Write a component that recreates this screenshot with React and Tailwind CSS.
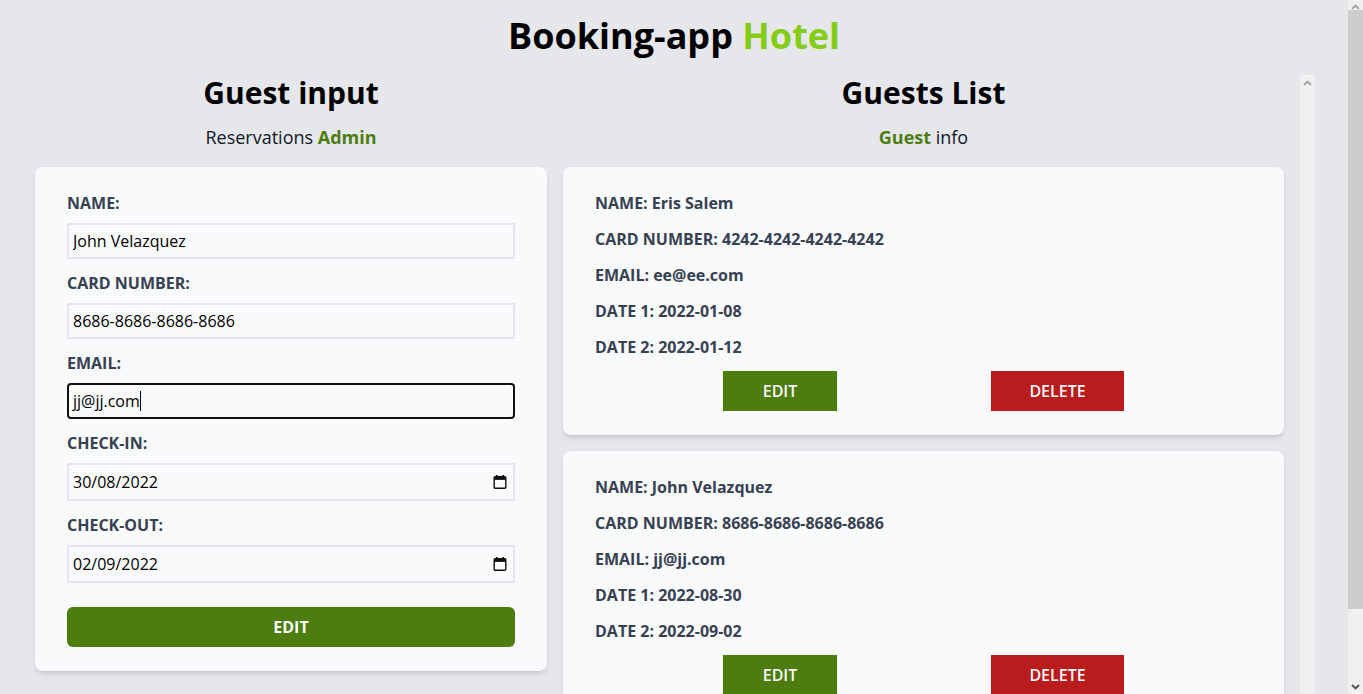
import React, { useState } from 'react';

const guests = [
  { id: 1, name: "Eris Salem", card: "4242-4242-4242-4242", email: "ee@ee.com", date1: "2022-01-08", date2: "2022-01-12" },
  { id: 2, name: "John Velazquez", card: "8686-8686-8686-8686", email: "jj@jj.com", date1: "2022-08-30", date2: "2022-09-02" },
  { id: 3, name: "Maria Lopez", card: "1234-5678-1234-5678", email: "mm@mm.com", date1: "2022-10-01", date2: "2022-10-05" },
];

function Chevron({ up = true, color = "#a3a3a3" }) {
  return (
    <svg width="9" height="6" viewBox="0 0 9 6">
      <path d={up ? "M1 5 L4.5 1.5 L8 5" : "M1 1 L4.5 4.5 L8 1"} fill="none" stroke={color} strokeWidth="1.8" />
    </svg>
  );
}

function CalendarIcon() {
  return (
    <svg width="14" height="15" viewBox="0 0 14 15" className="absolute right-2 top-1/2 -translate-y-1/2 pointer-events-none">
      <rect x="3" y="0.5" width="1.6" height="3" fill="#111" />
      <rect x="9.4" y="0.5" width="1.6" height="3" fill="#111" />
      <rect x="1.2" y="2.2" width="11.6" height="11.6" rx="1" fill="none" stroke="#111" strokeWidth="1.4" />
      <rect x="1.2" y="2.2" width="11.6" height="3.2" fill="#111" />
    </svg>
  );
}

function DateField({ value }) {
  return (
    <div className="relative mb-3">
      <input
        type="text"
        readOnly
        value={value}
        className="w-full h-[38px] border-2 border-gray-200 bg-transparent px-1 text-base text-black outline-none"
      />
      <CalendarIcon />
    </div>
  );
}

function GuestCard({ guest }) {
  return (
    <div className="bg-gray-50 rounded-lg shadow-md pt-6 pb-6 mb-4">
      <div className="px-8 text-base font-bold text-[#374151]">
        <p className="leading-6 mb-3">NAME: {guest.name}</p>
        <p className="leading-6 mb-3">CARD NUMBER: {guest.card}</p>
        <p className="leading-6 mb-3">EMAIL: {guest.email}</p>
        <p className="leading-6 mb-3">DATE 1: {guest.date1}</p>
        <p className="leading-6 mb-3">DATE 2: {guest.date2}</p>
      </div>
      <div className="flex justify-between px-[160px]">
        <button className="w-[114px] bg-[#4d7c0f] text-gray-50 font-semibold py-2 leading-6">EDIT</button>
        <button className="w-[133px] bg-[#b91c1c] text-gray-50 font-semibold py-2 leading-6">DELETE</button>
      </div>
    </div>
  );
}

export default function App() {
  const [name, setName] = useState("John Velazquez");
  const [card, setCard] = useState("8686-8686-8686-8686");

  return (
    <div className="flex h-screen overflow-hidden bg-gray-200 font-['Open_Sans',sans-serif] text-black">
      <div className="flex-1 min-w-0">
        <h1 className="pt-4 text-4xl leading-10 font-bold text-center">
          Booking-app <span className="text-[#84cc16]">Hotel</span>
        </h1>

        <div className="flex pl-[35px] pr-[33px] mt-[19px]">
          {/* guest input */}
          <div className="w-[512px] shrink-0">
            <h2 className="text-3xl leading-9 font-bold text-center">Guest input</h2>
            <p className="mt-3 text-lg leading-7 text-center text-gray-900">
              Reservations <span className="font-bold text-[#4d7c0f]">Admin</span>
            </p>

            <form className="mt-4 bg-gray-50 rounded-lg shadow-md px-8 pt-6 pb-6" onSubmit={(e) => e.preventDefault()}>
              <label className="block leading-6 mb-2 font-bold text-[#374151]">NAME:</label>
              <input
                type="text"
                value={name}
                onChange={(e) => setName(e.target.value)}
                className="block w-full h-9 mb-3 border-2 border-gray-200 bg-transparent px-1 text-base outline-none"
              />

              <label className="block leading-6 mb-2 font-bold text-[#374151]">CARD NUMBER:</label>
              <input
                type="text"
                value={card}
                onChange={(e) => setCard(e.target.value)}
                className="block w-full h-9 mb-3 border-2 border-gray-200 bg-transparent px-1 text-base outline-none"
              />

              <label className="block leading-6 mb-2 font-bold text-[#374151]">EMAIL:</label>
              <div className="flex items-center w-full h-9 mb-3 border-2 border-[#111] rounded-[4px] px-1 text-base">
                <span>jj@jj.com</span>
                <span className="inline-block w-px h-5 bg-black"></span>
              </div>

              <label className="block leading-6 mb-2 font-bold text-[#374151]">CHECK-IN:</label>
              <DateField value="30/08/2022" />

              <label className="block leading-6 mb-2 font-bold text-[#374151]">CHECK-OUT:</label>
              <DateField value="02/09/2022" />

              <button type="submit" className="mt-3 w-full bg-[#4d7c0f] text-gray-50 font-bold py-2 leading-6 rounded-md">
                EDIT
              </button>
            </form>
          </div>

          {/* guests list with its own scroll track */}
          <div className="flex-1 flex h-[690px]">
            <div className="flex-1 overflow-hidden px-4">
              <h2 className="text-3xl leading-9 font-bold text-center">Guests List</h2>
              <p className="mt-3 text-lg leading-7 text-center text-gray-900">
                <span className="font-bold text-[#4d7c0f]">Guest</span> info
              </p>
              <div className="mt-4">
                {guests.map((g) => (
                  <GuestCard key={g.id} guest={g} />
                ))}
              </div>
            </div>
            <div className="w-[15px] bg-[#f0f0f0] flex justify-center pt-[5px]">
              <Chevron />
            </div>
          </div>
        </div>
      </div>

      {/* page scroll track */}
      <div className="w-[15px] h-screen bg-[#f0f0f0] flex flex-col">
        <div className="h-[10px] flex justify-center items-end overflow-hidden">
          <Chevron />
        </div>
        <div className="h-[599px] bg-[#cdcdcd]"></div>
        <div className="flex-1 flex justify-center items-end pb-[4px]">
          <Chevron up={false} color="#505050" />
        </div>
      </div>
    </div>
  );
}
